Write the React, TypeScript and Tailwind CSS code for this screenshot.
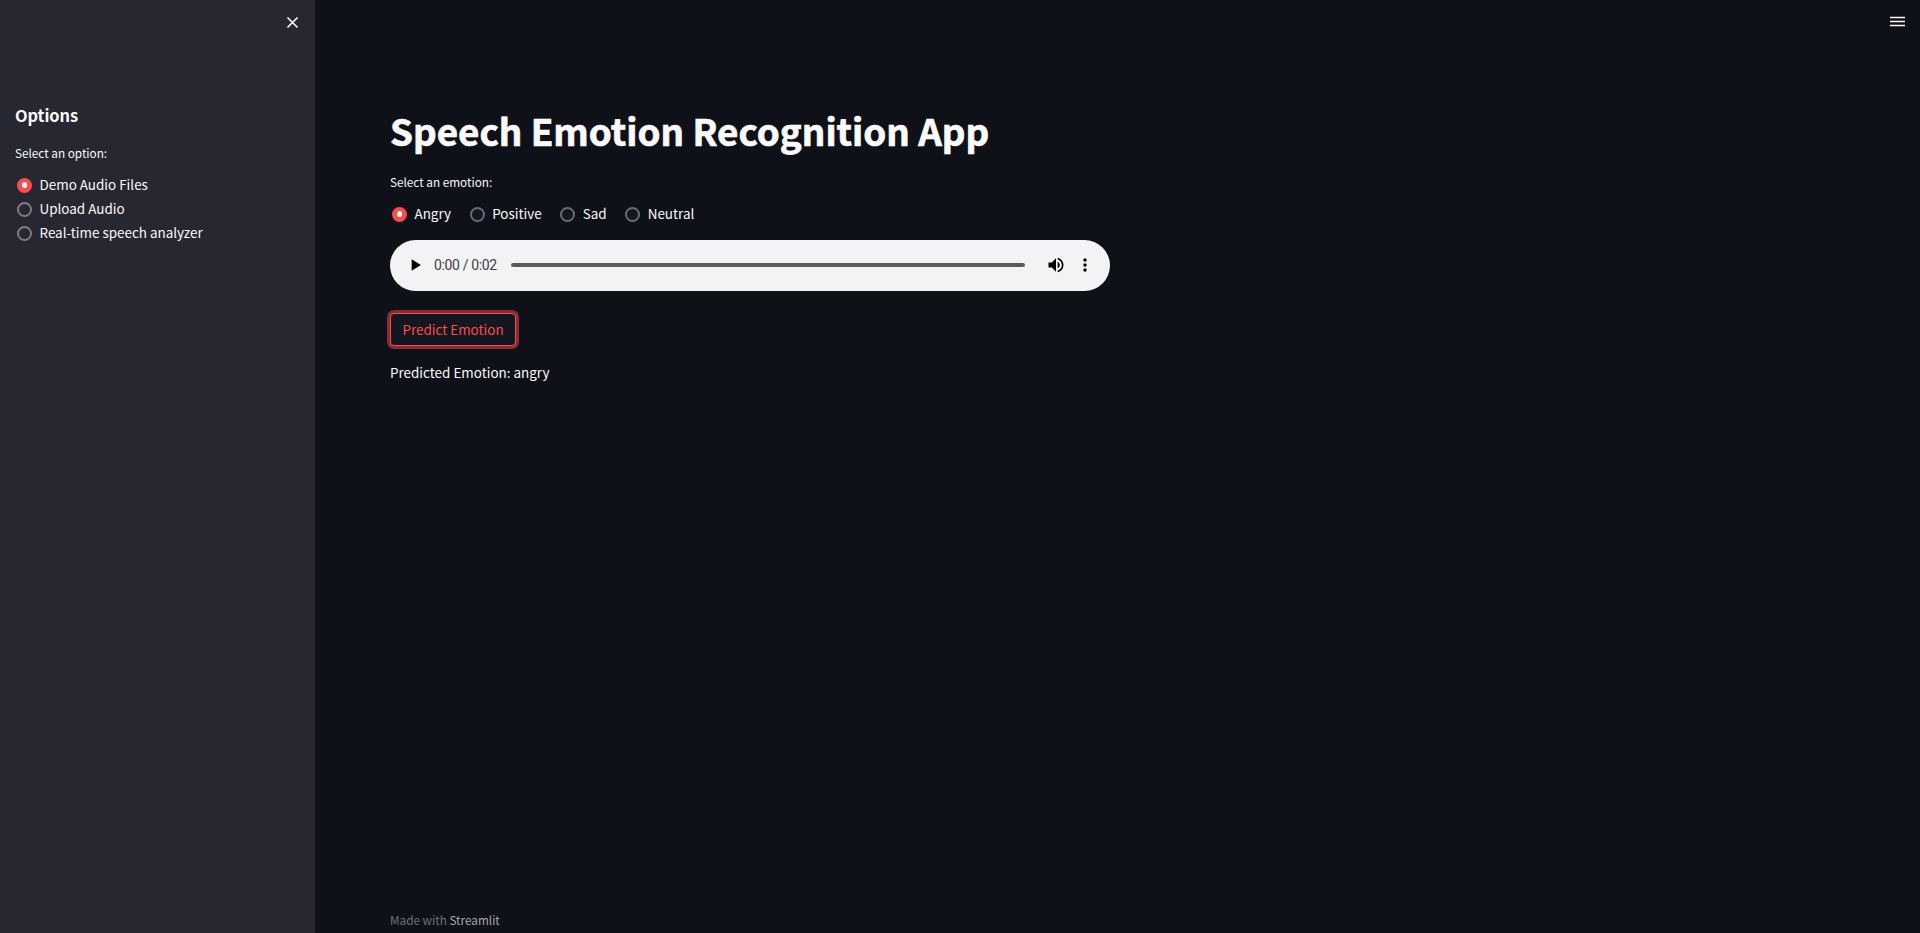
import React from "react";

const FONT = "font-['Noto_Sans_CJK_JP','Noto_Sans',sans-serif]";

function RadioDot({ checked, dark }: { checked?: boolean; dark?: boolean }) {
  if (checked) {
    return (
      <span className="flex size-[15px] shrink-0 items-center justify-center rounded-full bg-[#ff4b4b]">
        <span className="size-[5.6px] rounded-full bg-[#fafafa]" />
      </span>
    );
  }
  return (
    <span
      className={`size-[15px] shrink-0 rounded-full border-2 ${
        dark ? "border-[#6a6c70] bg-[#13171f]" : "border-[#7d7d83] bg-[#262730]"
      }`}
    />
  );
}

function Radio({ label, checked, dark }: { label: string; checked?: boolean; dark?: boolean }) {
  return (
    <label className="flex h-6 items-center gap-[7.5px] whitespace-nowrap text-[13.45px] leading-[22px]">
      <RadioDot checked={checked} dark={dark} />
      <span className="pb-[2px]">{label}</span>
    </label>
  );
}

function AudioPlayer() {
  return (
    <div className="mt-[14px] flex h-[51px] w-[720px] items-center rounded-full bg-[#f1f3f4] pl-[14.5px] text-black">
      <svg viewBox="0 0 24 24" className="mb-px size-5 shrink-0" fill="currentColor">
        <path d="M8 5v14l11-7z" />
      </svg>
      <span className="mb-px ml-[9.5px] w-[77px] whitespace-nowrap font-['Roboto',sans-serif] text-[14px] leading-5 tracking-[-0.36px] text-[#3f4041]">
        0:00 / 0:02
      </span>
      <div className="mb-px h-1 w-[514px] rounded-full bg-[#5a5a5a]" />
      <svg viewBox="0 0 24 24" className="mb-px ml-[20.5px] size-5 shrink-0" fill="currentColor">
        <path d="M3 9v6h4l5 5V4L7 9H3zm13.500 3c0-1.770-1.020-3.290-2.500-4.030v8.050c1.480-.730 2.500-2.250 2.500-4.020zM14 3.230v2.060c2.890.860 5 3.540 5 6.710s-2.110 5.850-5 6.710v2.060c4.010-.910 7-4.490 7-8.770s-2.990-7.860-7-8.770z" />
      </svg>
      <svg viewBox="0 0 24 24" className="mb-px ml-[9.5px] size-5 shrink-0" fill="currentColor">
        <path d="M12 8c1.100 0 2-.900 2-2s-.900-2-2-2-2 .900-2 2 .900 2 2 2zm0 2c-1.100 0-2 .900-2 2s.900 2 2 2 2-.900 2-2-.900-2-2-2zm0 6c-1.100 0-2 .900-2 2s.900 2 2 2 2-.900 2-2-.900-2-2-2z" />
      </svg>
    </div>
  );
}

function Sidebar() {
  return (
    <aside className="flex w-[315px] shrink-0 flex-col bg-[#262730]">
      <div className="flex h-[45px] items-center justify-end pr-[15px]">
        <button aria-label="Close sidebar" className="flex size-[15px] items-center justify-center">
          <svg viewBox="0 0 15 15" className="size-[15px]" fill="none" stroke="#fafafa" strokeWidth="1.6">
            <path d="M2.500 2.500l10 10M12.500 2.500l-10 10" />
          </svg>
        </button>
      </div>
      <div className="flex flex-col px-[15px] pt-[58px]">
        <h2 className="h-6 text-[16.4px] font-bold leading-6 tracking-[-0.08px]">Options</h2>
        <p className="mt-[16px] h-5 text-[11.75px] leading-5">Select an option:</p>
        <div className="mt-[10px] flex flex-col pl-[2px]">
          <Radio label="Demo Audio Files" checked />
          <Radio label="Upload Audio" />
          <Radio label="Real-time speech analyzer" />
        </div>
      </div>
    </aside>
  );
}

export default function App() {
  return (
    <div className={`flex h-[933px] w-full overflow-hidden bg-[#0e1117] text-[#fafafa] ${FONT}`}>
      <Sidebar />
      <main className="flex min-w-0 flex-1 flex-col pl-[75px]">
        <header className="flex h-[45px] shrink-0 items-center justify-end pr-[15px]">
          <button aria-label="Menu" className="flex size-[15px]">
            <svg viewBox="0 0 15 15" className="size-[15px]" fill="#fafafa">
              <path d="M0 1.700h15v1.600H0zM0 5.700h15v1.600H0zM0 9.700h15v1.600H0z" />
            </svg>
          </button>
        </header>
        <h1 className="mt-[60px] h-[50px] whitespace-nowrap text-[36.8px] font-bold leading-[50px] [-webkit-text-stroke:0.7px_#fafafa]">
          Speech Emotion Recognition App
        </h1>
        <p className="mt-[17px] h-5 text-[11.75px] leading-5">Select an emotion:</p>
        <div className="mt-[10px] flex gap-[18.6px] pl-[2px]">
          <Radio label="Angry" checked dark />
          <Radio label="Positive" dark />
          <Radio label="Sad" dark />
          <Radio label="Neutral" dark />
        </div>
        <AudioPlayer />
        <button className="mt-[22px] flex h-[33px] w-[126px] items-center justify-center whitespace-nowrap rounded-[4px] border border-[#ff4b4b] bg-[#13171f] pb-[2px] text-[13.45px] leading-[22px] text-[#ff4b4b] shadow-[0_0_0_3px_rgba(255,75,75,0.5)]">
          Predict Emotion
        </button>
        <p className="mt-[15px] h-6 text-[13.45px] leading-[22px]">Predicted Emotion: angry</p>
        <footer className="mt-auto h-[23px] text-[11.75px] leading-5 text-[#6f7175]">
          Made with <a className="text-[#a8a9ab]">Streamlit</a>
        </footer>
      </main>
    </div>
  );
}
